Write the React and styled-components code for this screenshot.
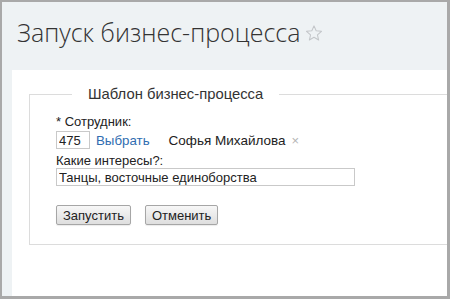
import React from "react";
import styled, { createGlobalStyle } from "styled-components";

const Global = createGlobalStyle`
  html, body { margin: 0; padding: 0; background: #ffffff; }
  * { box-sizing: border-box; }
`;

const Frame = styled.div`
  width: 450px;
  height: 299px;
  border: 2px solid #a9a9a9;
  border-right-width: 3px;
  border-bottom-width: 3px;
  background: #eef2f4;
  display: flex;
  flex-direction: column;
  overflow: hidden;
`;

const Header = styled.div`
  height: 68px;
  padding: 13px 0 0 15px;
  display: flex;
  align-items: flex-start;
  gap: 5px;
`;

const Title = styled.h1`
  margin: 0;
  font-family: "Open Sans", "Liberation Sans", sans-serif;
  font-weight: 300;
  font-size: 25px;
  line-height: 34px;
  color: #333333;
`;

const Star = styled.svg`
  margin-top: 9px;
  width: 18px;
  height: 18px;
`;

const Panel = styled.div`
  flex: 1;
  margin-left: 10px;
  background: #ffffff;
  padding: 16px 0 0 17px;
`;

const Fieldset = styled.fieldset`
  margin: 0 -10px 0 0;
  padding: 12px 0 19px 26px;
  border: 1px solid #dcdcdc;
  min-width: 0;
  font-family: "Liberation Sans", Arial, sans-serif;
`;

const Legend = styled.legend`
  margin-left: 16px;
  padding: 0 16px;
  font-size: 14.8px;
  line-height: 16px;
  color: #333333;
`;

const Label = styled.div`
  font-size: 13px;
  line-height: 15px;
  color: #222222;
  margin-top: ${(p) => p.$mt || 0}px;
`;

const Row = styled.div`
  display: flex;
  align-items: center;
  margin-top: ${(p) => p.$mt || 0}px;
  font-size: 13.5px;
`;

const Input = styled.input`
  flex: 0 0 ${(p) => p.$w}px;
  width: ${(p) => p.$w}px;
  min-width: ${(p) => p.$w}px;
  height: 18px;
  border: 1px solid #c9c9c9;
  padding: 0 2px;
  font-family: "Liberation Sans", Arial, sans-serif;
  font-size: 13px;
  color: #222222;
  background: #ffffff;
  outline: none;
`;

const Link = styled.a`
  margin-left: 6px;
  color: #2f6db1;
  text-decoration: none;
  font-size: 13.3px;
`;

const Name = styled.span`
  margin-left: 19px;
  color: #222222;
  font-size: 13.5px;
`;

const Remove = styled.span`
  margin-left: 6px;
  color: #b5b5b5;
  font-size: 13px;
`;

const Buttons = styled.div`
  display: flex;
  gap: 14px;
  margin-top: 19px;
`;

const Button = styled.button`
  height: 20px;
  padding: 0 6px;
  border: 1px solid #a6a6a6;
  border-radius: 2px;
  background: linear-gradient(#f7f7f7, #dedede);
  font-family: "Liberation Sans", Arial, sans-serif;
  font-size: 13px;
  color: #222222;
  box-shadow: 0 1px 1px rgba(0, 0, 0, 0.08);
`;

export default function App() {
  return (
    <>
      <Global />
      <Frame>
        <Header>
          <Title>Запуск бизнес-процесса</Title>
          <Star viewBox="0 0 24 24">
            <path
              d="M12 2.5l2.9 6.6 7.1.6-5.4 4.7 1.6 7-6.2-3.7-6.2 3.7 1.6-7L2 9.7l7.1-.6z"
              fill="none"
              stroke="#c3c6c9"
              strokeWidth="1.4"
              strokeLinejoin="round"
            />
          </Star>
        </Header>
        <Panel>
          <Fieldset>
            <Legend>Шаблон бизнес-процесса</Legend>
            <Label>* Сотрудник:</Label>
            <Row $mt={2}>
              <Input $w={34} defaultValue="475" />
              <Link href="#">Выбрать</Link>
              <Name>Софья Михайлова</Name>
              <Remove>×</Remove>
            </Row>
            <Label $mt={4}>Какие интересы?:</Label>
            <Row>
              <Input $w={299} defaultValue="Танцы, восточные единоборства" />
            </Row>
            <Buttons>
              <Button>Запустить</Button>
              <Button>Отменить</Button>
            </Buttons>
          </Fieldset>
        </Panel>
      </Frame>
    </>
  );
}
